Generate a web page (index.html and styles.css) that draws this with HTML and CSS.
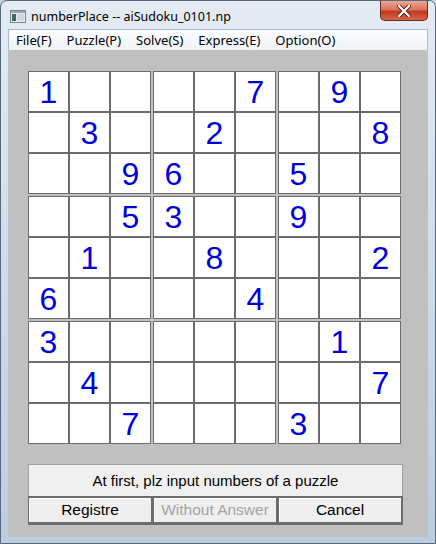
FILE: index.html
```html
<!DOCTYPE html>
<html lang="en">
<head>
  <meta charset="UTF-8" />
  <title>numberPlace -- aiSudoku_0101.np</title>
  <link rel="stylesheet" href="styles.css">
</head>
<body>
  <div class="window">
    <div class="titlebar">
      <svg class="app-icon" width="16" height="13" viewBox="0 0 16 13">
        <rect x="0.5" y="0.5" width="15" height="12" fill="#e8ecef" stroke="#7a8590"/>
        <rect x="1" y="1" width="14" height="2" fill="#9aa6b2"/>
        <rect x="2" y="4" width="4" height="7" fill="#3d6b5a"/>
        <rect x="7" y="4" width="7" height="7" fill="#cfd6dc"/>
      </svg>
      <span class="title">numberPlace -- aiSudoku_0101.np</span>
      <div class="close">
        <svg width="14" height="12" viewBox="0 0 14 12">
          <path d="M2 1 L12 11 M12 1 L2 11" stroke="#5a1a12" stroke-width="4" stroke-linecap="square"/>
          <path d="M2 1 L12 11 M12 1 L2 11" stroke="#ffffff" stroke-width="2.2" stroke-linecap="square"/>
        </svg>
      </div>
    </div>

    <div class="menubar">
      <span class="menu-item">File(F)</span>
      <span class="menu-item">Puzzle(P)</span>
      <span class="menu-item">Solve(S)</span>
      <span class="menu-item">Express(E)</span>
      <span class="menu-item">Option(O)</span>
    </div>

    <div class="client">
      <div class="board">
        <div class="box">
          <div class="cell">1</div><div class="cell"></div><div class="cell"></div>
          <div class="cell"></div><div class="cell">3</div><div class="cell"></div>
          <div class="cell"></div><div class="cell"></div><div class="cell">9</div>
        </div>
        <div class="box">
          <div class="cell"></div><div class="cell"></div><div class="cell">7</div>
          <div class="cell"></div><div class="cell">2</div><div class="cell"></div>
          <div class="cell">6</div><div class="cell"></div><div class="cell"></div>
        </div>
        <div class="box">
          <div class="cell"></div><div class="cell">9</div><div class="cell"></div>
          <div class="cell"></div><div class="cell"></div><div class="cell">8</div>
          <div class="cell">5</div><div class="cell"></div><div class="cell"></div>
        </div>
        <div class="box">
          <div class="cell"></div><div class="cell"></div><div class="cell">5</div>
          <div class="cell"></div><div class="cell">1</div><div class="cell"></div>
          <div class="cell">6</div><div class="cell"></div><div class="cell"></div>
        </div>
        <div class="box">
          <div class="cell">3</div><div class="cell"></div><div class="cell"></div>
          <div class="cell"></div><div class="cell">8</div><div class="cell"></div>
          <div class="cell"></div><div class="cell"></div><div class="cell">4</div>
        </div>
        <div class="box">
          <div class="cell">9</div><div class="cell"></div><div class="cell"></div>
          <div class="cell"></div><div class="cell"></div><div class="cell">2</div>
          <div class="cell"></div><div class="cell"></div><div class="cell"></div>
        </div>
        <div class="box">
          <div class="cell">3</div><div class="cell"></div><div class="cell"></div>
          <div class="cell"></div><div class="cell">4</div><div class="cell"></div>
          <div class="cell"></div><div class="cell"></div><div class="cell">7</div>
        </div>
        <div class="box">
          <div class="cell"></div><div class="cell"></div><div class="cell"></div>
          <div class="cell"></div><div class="cell"></div><div class="cell"></div>
          <div class="cell"></div><div class="cell"></div><div class="cell"></div>
        </div>
        <div class="box">
          <div class="cell"></div><div class="cell">1</div><div class="cell"></div>
          <div class="cell"></div><div class="cell"></div><div class="cell">7</div>
          <div class="cell">3</div><div class="cell"></div><div class="cell"></div>
        </div>
      </div>

      <div class="status">At first, plz input numbers of a puzzle</div>

      <div class="buttons">
        <button class="button">Registre</button>
        <button class="button" disabled>Without Answer</button>
        <button class="button">Cancel</button>
      </div>
    </div>
  </div>
</body>
</html>
```

FILE: styles.css
```css
* {
  box-sizing: border-box;
}

body {
  margin: 0;
  font-family: "Liberation Sans", Arial, sans-serif;
  background: #c8d6e6;
}

.window {
  width: 436px;
  height: 544px;
  display: flex;
  flex-direction: column;
  padding: 0 7px 6px;
  border: 1px solid #56687c;
  border-radius: 7px 7px 0 0;
  background: linear-gradient(180deg, #e4ebf3 0%, #d3dfec 40%, #bccde0 100%);
}

.titlebar {
  height: 28px;
  display: flex;
  align-items: flex-start;
}

.app-icon {
  margin: 9px 0 0 2px;
}

.title {
  margin: 7px 0 0 5px;
  font-family: "Noto Sans", sans-serif;
  font-size: 12.5px;
  color: #000;
}

.close {
  margin-left: auto;
  width: 48px;
  height: 20px;
  display: flex;
  justify-content: center;
  align-items: center;
  border: 1px solid #6b2a20;
  border-top: none;
  border-radius: 0 0 5px 5px;
  background: linear-gradient(180deg, #eca696 0%, #dc735b 45%, #c43a20 55%, #d8644a 100%);
}

.menubar {
  height: 21px;
  display: flex;
  align-items: center;
  gap: 15px;
  padding-left: 7px;
  border: 1px solid #a9b8c8;
  border-bottom: none;
  background: linear-gradient(180deg, #fdfeff, #eef2f7);
  font-family: "Noto Sans", sans-serif;
  font-size: 13px;
  color: #000;
}

.client {
  flex: 1;
  display: flex;
  flex-direction: column;
  padding: 21px 0 0 20px;
  background: #c0c0c0;
}

.board {
  display: grid;
  grid-template-columns: repeat(3, 123px);
  gap: 2px;
}

.box {
  display: grid;
  grid-template-columns: repeat(3, 41px);
  grid-auto-rows: 41px;
}

.cell {
  display: flex;
  justify-content: center;
  align-items: center;
  border: 1px solid #6c6c6c;
  background: #fff;
  color: #0000dd;
  font-size: 32px;
  line-height: 1;
}

.status {
  width: 375px;
  height: 32px;
  margin-top: 20px;
  display: flex;
  justify-content: center;
  align-items: center;
  border: 1px solid #a0a0a0;
  border-bottom: none;
  background: #f0f0f0;
  font-size: 15px;
  color: #000;
}

.buttons {
  width: 375px;
  display: grid;
  grid-template-columns: 125px 125px 125px;
}

.button {
  height: 29px;
  padding: 0;
  border: 1px solid #6c6c6c;
  border-width: 2px 2px 3px 1px;
  background: #efefef;
  box-shadow: inset 1px 1px #fff;
  font-family: "Liberation Sans", Arial, sans-serif;
  font-size: 15.5px;
  color: #000;
}

.button:disabled {
  color: #a3a3a3;
}
```
